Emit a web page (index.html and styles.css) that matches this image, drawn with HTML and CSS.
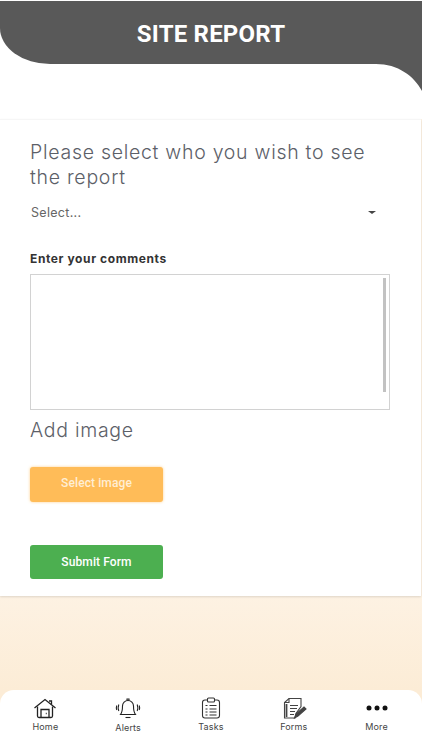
FILE: index.html
```html
<!DOCTYPE html>
<html lang="en">
<head>
<meta charset="UTF-8">
<meta name="viewport" content="width=device-width, initial-scale=1.0">
<title>Site Report</title>
<link rel="stylesheet" href="styles.css">
</head>
<body>

<div class="top-area">
  <header class="top-bar">
    <h1>SITE REPORT</h1>
  </header>
</div>

<main class="content">
  <form class="report-card">
    <h2 class="section-title">Please select who you wish to see the report</h2>
    <div class="select-row">
      <span>Select...</span>
      <span class="caret"></span>
    </div>

    <label class="comments-label" for="comments">Enter your comments</label>
    <div class="comments-box">
      <span class="scroll-thumb"></span>
    </div>

    <h2 class="section-title add-image">Add image</h2>
    <button type="button" class="btn btn-orange">Select image</button>
    <button type="submit" class="btn btn-green">Submit Form</button>
  </form>
</main>

<nav class="bottom-nav">
  <a class="nav-item">
    <svg viewBox="0 0 24 22" width="24" height="22" fill="none" stroke="#222" stroke-width="1.300">
      <path d="M1.500 11 12 2.500 22.500 11"/>
      <path d="M18.500 7.500V4h-2.500"/>
      <path d="M4.500 9.500V19a1.500 1.500 0 0 0 1.500 1.500h12a1.500 1.500 0 0 0 1.500-1.500V9.500"/>
      <path d="M8 20.500V12.500h8v8"/>
      <path d="M12.800 16.500h.9"/>
    </svg>
    <span>Home</span>
  </a>
  <a class="nav-item nav-alerts">
    <svg viewBox="0 0 26 22" width="26" height="22" fill="none" stroke="#222" stroke-width="1.100">
      <path d="M5.500 17.500c2-2.500 2-5 2-8.500a5.500 5.500 0 0 1 11 0c0 3.500 0 6 2 8.500z"/>
      <path d="M10.500 20.500h5"/>
      <path d="M12 3.500V2h2v1.500"/>
      <path d="M3.800 7.500c-.8 2-.8 4.500 0 6.500M1.800 8.500c-.6 1.500-.6 3 0 4.500M22.200 7.500c.8 2 .8 4.500 0 6.500M24.200 8.500c.6 1.500.6 3 0 4.500"/>
    </svg>
    <span>Alerts</span>
  </a>
  <a class="nav-item">
    <svg viewBox="0 0 24 22" width="24" height="22" fill="none" stroke="#333" stroke-width="1.100">
      <rect x="3.500" y="3" width="17" height="18" rx="2.500"/>
      <rect x="8.500" y="1" width="7" height="4" rx="1" fill="#fff"/>
      <path d="M6.500 8.500h2M10.500 8.500h7M6.500 12h2M10.500 12h7M6.500 15h2M10.500 15h7M6.500 18h2M10.500 18h7"/>
    </svg>
    <span>Tasks</span>
  </a>
  <a class="nav-item">
    <svg viewBox="0 0 26 22" width="26" height="22" fill="none" stroke="#444" stroke-width="1.100">
      <path d="M8 1.500h12v8l-5 7-1 4.500H3.500V5.500z"/>
      <path d="M8 1.500v4H3.500"/>
      <path d="M5.500 7v13" stroke-width="1.800"/>
      <path d="M9 8.500h8M9 11.500h7M9 14.500h5M9 17.500h4"/>
      <path d="M13.500 21l1.500-4 8-7 2 2-8 7z" fill="#444"/>
    </svg>
    <span>Forms</span>
  </a>
  <a class="nav-item">
    <svg viewBox="0 0 24 22" width="24" height="22" fill="#111">
      <circle cx="4" cy="11" r="2.500"/>
      <circle cx="12" cy="11" r="2.500"/>
      <circle cx="20" cy="11" r="2.500"/>
    </svg>
    <span>More</span>
  </a>
</nav>

</body>
</html>
```

FILE: styles.css
```css
* {
  box-sizing: border-box;
}

html, body {
  height: 100%;
}

body {
  margin: 0;
  display: flex;
  flex-direction: column;
  background: linear-gradient(to bottom, #fdf2e3 79%, #fcecd6 92%);
  font-family: Roboto, "Liberation Sans", sans-serif;
}

.top-area {
  padding: 1px 0 55px;
  background-color: #fff;
  flex-shrink: 0;
}

.top-bar {
  position: relative;
  height: 63px;
  background-color: #595959;
  border-bottom-left-radius: 50px 36px;
}

/* grey corner hanging under the right side of the bar */
.top-bar:after {
  content: "";
  position: absolute;
  top: 100%;
  right: 0;
  width: 46px;
  height: 27px;
  background-color: #595959;
  clip-path: path("M0 0 H46 V27 C38 12 22 0 0 0 Z");
}

.top-bar h1 {
  margin: 0;
  padding-top: 20px;
  text-align: center;
  color: #fff;
  font-size: 24px;
  line-height: 26px;
  font-weight: 700;
  letter-spacing: 0.2px;
}

.content {
  flex: 1;
}

.report-card {
  height: 477px;
  padding: 20px 31px 0 30px;
  margin-right: 1px;
  background-color: #fff;
  border-top: 1px solid #f6f6f6;
  box-shadow: 0 1px 2px rgba(0, 0, 0, 0.12);
}

.section-title {
  margin: 0;
  color: #5c6068;
  font-family: Inter, sans-serif;
  font-size: 19.500px;
  line-height: 25px;
  font-weight: 300;
  letter-spacing: 0.72px;
}

.select-row {
  display: flex;
  justify-content: space-between;
  align-items: center;
  height: 20px;
  margin-top: 12px;
  padding-right: 14px;
  padding-left: 1px;
  color: #666;
  font-family: Inter, sans-serif;
  font-size: 12.500px;
  letter-spacing: 0.3px;
}

.caret {
  border-left: 4px solid transparent;
  border-right: 4px solid transparent;
  border-top: 3px solid #444;
}

.comments-label {
  display: block;
  margin-top: 29px;
  color: #333;
  font-family: Inter, sans-serif;
  font-size: 12px;
  line-height: 16px;
  font-weight: 700;
  letter-spacing: 0.6px;
}

.comments-box {
  display: flex;
  justify-content: flex-end;
  height: 136px;
  margin-top: 7px;
  padding: 3px 3px 17px 0;
  border: 1px solid #d2d2d2;
}

.scroll-thumb {
  width: 3px;
  background-color: #c2c2c2;
}

.add-image {
  margin-top: 8px;
}

.btn {
  display: block;
  width: 133px;
  border: none;
  border-radius: 3px;
  color: #fff;
  font-family: Roboto, sans-serif;
  font-size: 12px;
  font-weight: 500;
  letter-spacing: 0.1px;
}

.btn-orange {
  height: 35px;
  margin-top: 24px;
  padding-bottom: 4px;
  background-color: #ffbc58;
  box-shadow: 0 0 3px rgba(255, 188, 88, 0.7);
  color: #ffeed4;
}

.btn-green {
  height: 34px;
  margin-top: 43px;
  background-color: #4caf50;
}

.bottom-nav {
  display: flex;
  justify-content: space-around;
  height: 60px;
  padding: 7px 4px 0;
  background-color: #fff;
  border-radius: 14px 14px 0 0;
  flex-shrink: 0;
}

.nav-item {
  display: flex;
  flex-direction: column;
  align-items: center;
  width: 60px;
  color: #444;
  font-family: Inter, sans-serif;
  font-size: 9px;
  line-height: 12px;
  letter-spacing: 0.15px;
}

.nav-item span {
  margin-top: 2px;
}

.nav-alerts span {
  margin-top: 3px;
}
```
